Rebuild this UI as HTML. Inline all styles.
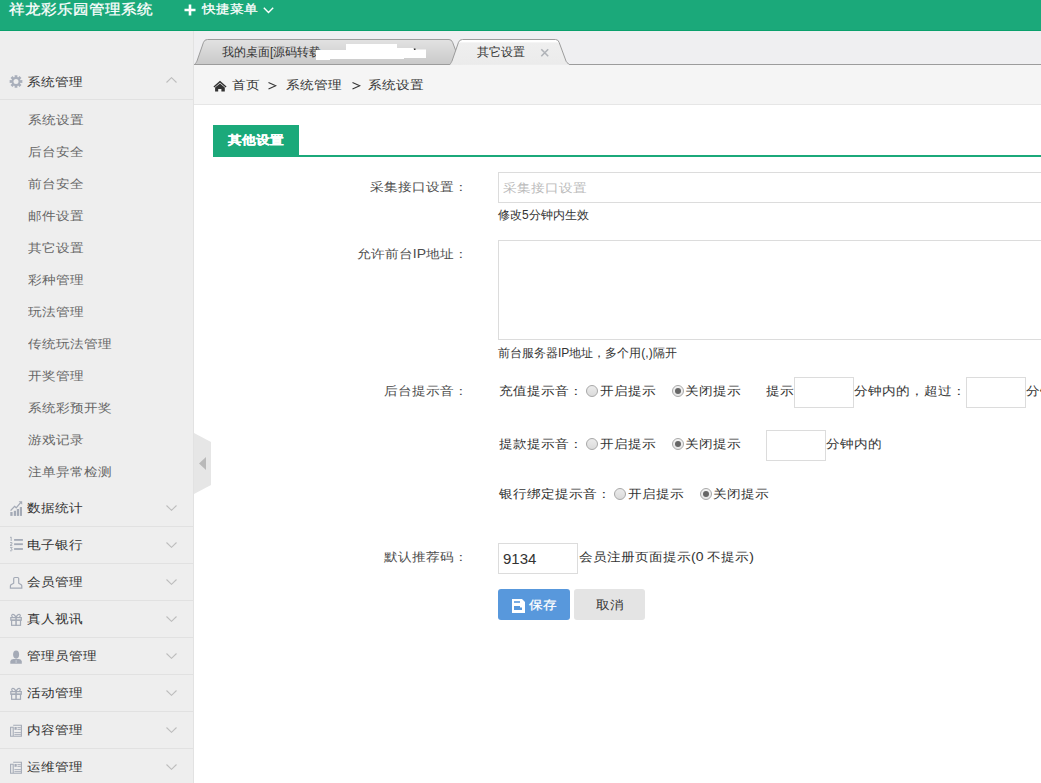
<!DOCTYPE html>
<html><head><meta charset="utf-8">
<style>
*{margin:0;padding:0;box-sizing:border-box}
html,body{width:1041px;height:783px;overflow:hidden;background:#fff;font-family:"Liberation Sans",sans-serif;font-size:14px;color:#333}
.a{position:absolute;white-space:nowrap}
#hdr{position:absolute;left:0;top:0;width:1041px;height:31px;background:#1ba97a;border-bottom:1px solid #0aa06c}
#side{position:absolute;left:0;top:31px;width:194px;height:752px;background:#eeeeee;border-right:1px solid #e2e2e2}
#tabs{position:absolute;left:194px;top:31px;width:847px;height:34px;background:#efeff1}
#crumb{position:absolute;left:194px;top:65px;width:847px;height:40px;background:#f5f5f5;border-bottom:1px solid #e6e6e6}
.t14{font-size:14px;line-height:20px;height:20px;transform:scaleY(0.88);transform-origin:0 3px}
.t12{font-size:12px;line-height:18px;height:18px}
.sub{color:#666;left:28px}
.grp{color:#333;left:27px}
.sep{position:absolute;left:0;width:193px;height:1px;background:#e1e1e1}
.chev{position:absolute;left:166px;width:11px;height:6px}
.ico{position:absolute;left:9px;width:14px;height:14px}
.lbl{color:#4d4d4d;text-align:right;width:200px;left:268px}
.inp{position:absolute;border:1px solid #dcdcdc;background:#fff}
.radio{position:absolute;width:12px;height:12px;border-radius:50%;border:1px solid #b5b5b5;background:linear-gradient(#f2f2f2,#d9d9d9)}
.radio.on::after{content:"";position:absolute;left:2.5px;top:2.5px;width:5px;height:5px;border-radius:50%;background:#555}
</style></head><body>

<svg width="0" height="0" style="position:absolute"><defs><linearGradient id="rg1" x1="0" y1="0" x2="0" y2="1"><stop offset="0" stop-color="#ececec"/><stop offset="1" stop-color="#dadada"/></linearGradient><linearGradient id="rg2" x1="0" y1="0" x2="0" y2="1"><stop offset="0" stop-color="#f4f4f4"/><stop offset="1" stop-color="#e4e4e4"/></linearGradient></defs></svg>
<div id="hdr"></div>
<div class="a" style="left:9px;top:0px;font-size:16px;line-height:20px;color:#fff;-webkit-text-stroke:0.3px #fff;transform:scaleY(0.9);transform-origin:0 2px">祥龙彩乐园管理系统</div>
<svg class="a" style="left:184px;top:4px" width="12" height="12" viewBox="0 0 12 12"><path d="M6 0.5V11.5M0.5 6H11.5" stroke="#fff" stroke-width="2.6"/></svg>
<div class="a t14" style="left:202px;top:-1px;color:#fff;-webkit-text-stroke:0.3px #fff">快捷菜单</div>
<svg class="a" style="left:263px;top:7px" width="11" height="7" viewBox="0 0 11 7"><path d="M0.8 0.8L5.5 5.5L10.2 0.8" stroke="#fff" stroke-width="1.4" fill="none"/></svg>

<div id="side"></div>

<!-- sidebar -->
<svg class="a" style="left:8px;top:73px" width="16" height="17" viewBox="8 73 16 17"><path d="M14.73 77.39 L14.58 75.16 L17.42 75.16 L17.27 77.39 L18.01 77.70 L19.48 76.01 L21.49 78.02 L19.80 79.49 L20.11 80.23 L22.34 80.08 L22.34 82.92 L20.11 82.77 L19.80 83.51 L21.49 84.98 L19.48 86.99 L18.01 85.30 L17.27 85.61 L17.42 87.84 L14.58 87.84 L14.73 85.61 L13.99 85.30 L12.52 86.99 L10.51 84.98 L12.20 83.51 L11.89 82.77 L9.66 82.92 L9.66 80.08 L11.89 80.23 L12.20 79.49 L10.51 78.02 L12.52 76.01 L13.99 77.70Z" fill="#a9afbb"/><circle cx="16" cy="81.5" r="4.6" fill="#a9afbb"/><circle cx="16" cy="81.5" r="2.5" fill="#eee"/></svg>
<svg class="a" style="left:8px;top:499px" width="16" height="18" viewBox="8 499 16 18"><g fill="#a4aab6"><rect x="10.3" y="512" width="2.3" height="3.9"/><rect x="13.8" y="510.8" width="2.2" height="5.1"/><rect x="16.8" y="509" width="2.2" height="6.9"/><rect x="19.8" y="507" width="2.2" height="8.9"/></g><path d="M10.6 510.6L14.6 506.3L16.2 507.8L20.6 502.6" stroke="#a4aab6" stroke-width="1.3" fill="none"/><path d="M18.6 501.2H22.2V504.8Z" fill="#a4aab6"/></svg>
<svg class="a" style="left:8px;top:535px" width="16" height="18" viewBox="8 535 16 18"><g fill="#a4aab6"><rect x="14.1" y="539" width="8.8" height="1.8"/><rect x="14.1" y="543.3" width="8.8" height="1.8"/><rect x="14.1" y="548.1" width="8.8" height="1.8"/></g><g stroke="#a4aab6" stroke-width="0.9" fill="none"><path d="M10 537.5L11.2 537V541"/><path d="M10 542.6H12V543.9L10 545.4H12.3"/><path d="M10 547.4H12.2L11 548.9Q12.4 549 12.2 550.2Q11.9 551 10 550.8"/></g></svg>
<svg class="a" style="left:8px;top:575px" width="16" height="16" viewBox="8 575 16 16"><path d="M13.7 583.2V578.6Q13.7 577.5 14.8 577.5H17.6Q18.7 577.5 18.7 578.6V583.2L21.2 584.8Q21.8 585.3 21.8 586.2V588.2H10.4V586.2Q10.4 585.3 11 584.8Z" stroke="#a4aab6" stroke-width="1.2" fill="none"/></svg>
<svg class="a" style="left:8px;top:611px" width="16" height="17" viewBox="8 611 16 17"><g transform="translate(0 0)"><g stroke="#a4aab6" stroke-width="1.2" fill="none"><path d="M16 617.4Q14 613.5 12.2 614.6Q11 615.6 12.6 617.2M16 617.4Q18 613.5 19.8 614.6Q21 615.6 19.4 617.2"/><rect x="10.8" y="617.6" width="10.5" height="2.6"/><rect x="11.6" y="620.2" width="8.9" height="5.1"/></g><rect x="15.3" y="617" width="1.5" height="8.9" fill="#a4aab6"/></g></svg>
<svg class="a" style="left:8px;top:685px" width="16" height="17" viewBox="8 685 16 17"><g transform="translate(0 74)"><g stroke="#a4aab6" stroke-width="1.2" fill="none"><path d="M16 617.4Q14 613.5 12.2 614.6Q11 615.6 12.6 617.2M16 617.4Q18 613.5 19.8 614.6Q21 615.6 19.4 617.2"/><rect x="10.8" y="617.6" width="10.5" height="2.6"/><rect x="11.6" y="620.2" width="8.9" height="5.1"/></g><rect x="15.3" y="617" width="1.5" height="8.9" fill="#a4aab6"/></g></svg>
<svg class="a" style="left:8px;top:648px" width="16" height="18" viewBox="8 648 16 18"><ellipse cx="16.1" cy="654.6" rx="3" ry="4.1" fill="#a4aab6"/><path d="M10.3 663.8V661.6Q10.5 659.4 13.2 659H19Q21.6 659.4 21.8 661.6V663.8Z" fill="#a4aab6"/><rect x="15.6" y="660" width="1" height="3" fill="#c7ccd4"/></svg>
<svg class="a" style="left:8px;top:722px" width="16" height="17" viewBox="8 722 16 17"><g transform="translate(0 0)"><g stroke="#a4aab6" stroke-width="1.1" fill="none"><path d="M13.2 725.2H21.4V736.3H10.6V727.3H13.2V736.3"/></g><g fill="#a4aab6"><rect x="14.5" y="727" width="2.2" height="2.8"/><rect x="17.4" y="727.2" width="3.4" height="0.9"/><rect x="17.4" y="728.9" width="3.4" height="0.9"/><rect x="14.4" y="732.2" width="6.5" height="0.9"/><rect x="14.4" y="734.2" width="6.5" height="0.9"/></g></g></svg>
<svg class="a" style="left:8px;top:759px" width="16" height="17" viewBox="8 759 16 17"><g transform="translate(0 37)"><g stroke="#a4aab6" stroke-width="1.1" fill="none"><path d="M13.2 725.2H21.4V736.3H10.6V727.3H13.2V736.3"/></g><g fill="#a4aab6"><rect x="14.5" y="727" width="2.2" height="2.8"/><rect x="17.4" y="727.2" width="3.4" height="0.9"/><rect x="17.4" y="728.9" width="3.4" height="0.9"/><rect x="14.4" y="732.2" width="6.5" height="0.9"/><rect x="14.4" y="734.2" width="6.5" height="0.9"/></g></g></svg>

<svg class="ico" style="top:74px;display:none" width="14" height="14" viewBox="0 0 14 14"><g fill="#a4aab6"><path d="M7 1.2l1.1 1.6 1.9-.6.2 1.9 1.9.6-.8 1.8 1.2 1.5-1.7 1 .2 1.9-1.9 0-.8 1.8-1.6-1.1-1.6 1.1-.8-1.8-1.9 0 .2-1.9-1.7-1 1.2-1.5-.8-1.8 1.9-.6.2-1.9 1.9.6z"/></g><circle cx="7" cy="7" r="2.3" fill="#eee"/></svg>
<div class="a t14 grp" style="top:72px">系统管理</div>
<svg class="chev" style="top:77px" viewBox="0 0 11 6"><path d="M0.5 5.5L5.5 0.7L10.5 5.5" stroke="#bdbdbd" stroke-width="1.1" fill="none"/></svg>
<div class="sep" style="top:99px"></div>
<div class="a t14 sub" style="top:110px">系统设置</div>
<div class="a t14 sub" style="top:142px">后台安全</div>
<div class="a t14 sub" style="top:174px">前台安全</div>
<div class="a t14 sub" style="top:206px">邮件设置</div>
<div class="a t14 sub" style="top:238px">其它设置</div>
<div class="a t14 sub" style="top:270px">彩种管理</div>
<div class="a t14 sub" style="top:302px">玩法管理</div>
<div class="a t14 sub" style="top:334px">传统玩法管理</div>
<div class="a t14 sub" style="top:366px">开奖管理</div>
<div class="a t14 sub" style="top:398px">系统彩预开奖</div>
<div class="a t14 sub" style="top:430px">游戏记录</div>
<div class="a t14 sub" style="top:462px">注单异常检测</div>
<div class="a t14 grp" style="top:498px">数据统计</div>
<svg class="chev" style="top:505px" viewBox="0 0 11 6"><path d="M0.5 0.5L5.5 5.3L10.5 0.5" stroke="#bdbdbd" stroke-width="1.1" fill="none"/></svg>
<div class="sep" style="top:526px"></div>
<div class="a t14 grp" style="top:535px">电子银行</div>
<svg class="chev" style="top:542px" viewBox="0 0 11 6"><path d="M0.5 0.5L5.5 5.3L10.5 0.5" stroke="#bdbdbd" stroke-width="1.1" fill="none"/></svg>
<div class="sep" style="top:563px"></div>
<div class="a t14 grp" style="top:572px">会员管理</div>
<svg class="chev" style="top:579px" viewBox="0 0 11 6"><path d="M0.5 0.5L5.5 5.3L10.5 0.5" stroke="#bdbdbd" stroke-width="1.1" fill="none"/></svg>
<div class="sep" style="top:600px"></div>
<div class="a t14 grp" style="top:609px">真人视讯</div>
<svg class="chev" style="top:616px" viewBox="0 0 11 6"><path d="M0.5 0.5L5.5 5.3L10.5 0.5" stroke="#bdbdbd" stroke-width="1.1" fill="none"/></svg>
<div class="sep" style="top:637px"></div>
<div class="a t14 grp" style="top:646px">管理员管理</div>
<svg class="chev" style="top:653px" viewBox="0 0 11 6"><path d="M0.5 0.5L5.5 5.3L10.5 0.5" stroke="#bdbdbd" stroke-width="1.1" fill="none"/></svg>
<div class="sep" style="top:674px"></div>
<div class="a t14 grp" style="top:683px">活动管理</div>
<svg class="chev" style="top:690px" viewBox="0 0 11 6"><path d="M0.5 0.5L5.5 5.3L10.5 0.5" stroke="#bdbdbd" stroke-width="1.1" fill="none"/></svg>
<div class="sep" style="top:711px"></div>
<div class="a t14 grp" style="top:720px">内容管理</div>
<svg class="chev" style="top:727px" viewBox="0 0 11 6"><path d="M0.5 0.5L5.5 5.3L10.5 0.5" stroke="#bdbdbd" stroke-width="1.1" fill="none"/></svg>
<div class="sep" style="top:748px"></div>
<div class="a t14 grp" style="top:757px">运维管理</div>
<svg class="chev" style="top:764px" viewBox="0 0 11 6"><path d="M0.5 0.5L5.5 5.3L10.5 0.5" stroke="#bdbdbd" stroke-width="1.1" fill="none"/></svg>
<div class="sep" style="top:785px"></div>
<svg class="a" style="left:194px;top:433px" width="17" height="61" viewBox="0 0 17 61"><path d="M0 0L17 9V52L0 61Z" fill="#e6e6e6"/><path d="M12 24V37L5 30.5Z" fill="#b9b9b9"/></svg>
<div id="tabs"></div>
<div id="crumb"></div>


<!-- tabs -->
<svg class="a" style="left:194px;top:31px" width="847" height="34" viewBox="194 31 847 34">
<defs>
<linearGradient id="g1" x1="0" y1="0" x2="0" y2="1"><stop offset="0" stop-color="#e2e2e2"/><stop offset="1" stop-color="#c9c9c9"/></linearGradient>
<linearGradient id="g2" x1="0" y1="0" x2="0" y2="1"><stop offset="0" stop-color="#ffffff"/><stop offset="0.08" stop-color="#ffffff"/><stop offset="0.14" stop-color="#efefef"/><stop offset="1" stop-color="#ebebeb"/></linearGradient>
</defs>
<path d="M194.5 64.5C196 63 196.5 62 197 61L203.5 42.3Q204.5 39.5 207.5 39.5L449 39.5Q451.6 39.5 452.6 42.3L461 64.5Z" fill="url(#g1)" stroke="#9c9c9c" stroke-width="1"/>
<path d="M569 64.5H1041" stroke="#9c9c9c" stroke-width="1"/>
<path d="M194 64.5H452" stroke="#9c9c9c" stroke-width="1"/>
<path d="M449.5 65C451 63 451.5 62 452 61L458.5 42.3Q459.5 39.5 462.5 39.5L555.5 39.5Q558.1 39.5 559.1 42.3L566 61C566.5 62 567 63 569.5 64.5" fill="url(#g2)" stroke="#9c9c9c" stroke-width="1"/>
<path d="M450.5 65H568.5" stroke="#ededed" stroke-width="1.2"/>
<path d="M541.3 49.3L548.2 56.2M548.2 49.3L541.3 56.2" stroke="#b0b3b8" stroke-width="1.6"/>
</svg>
<div class="a t12" style="left:222px;top:43px;color:#333">我的桌面[源码转载</div>
<svg class="a" style="left:314px;top:42px" width="115" height="20" viewBox="314 42 115 20"><path d="M316 50H346V44H397V48H413V49.5H426V58H404V59H330V60H316Z" fill="#fff"/><path d="M414 48.5h1.5v1.5h-1.5z" fill="#333"/></svg>
<div class="a t12" style="left:477px;top:43px;color:#333">其它设置</div>

<!-- breadcrumb -->
<svg class="a" style="left:212px;top:79px" width="16" height="14" viewBox="212 79 16 14"><path d="M213.9 87L220 81.7L226.1 87" stroke="#333" stroke-width="1.4" fill="none"/><path d="M215.1 91.6V87.6L220 83.6L224.8 87.6V91.6H221.4V89H218.2V91.6Z" fill="#333"/></svg>
<div class="a t14" style="left:232px;top:75px;color:#333">首页</div>
<svg class="a" style="left:268px;top:82px" width="9" height="8" viewBox="0 0 9 8"><path d="M0.5 0.6L7.8 3.8L0.5 7" stroke="#333" stroke-width="1.1" fill="none"/></svg>
<div class="a t14" style="left:286px;top:75px;color:#333">系统管理</div>
<svg class="a" style="left:352px;top:82px" width="9" height="8" viewBox="0 0 9 8"><path d="M0.5 0.6L7.8 3.8L0.5 7" stroke="#333" stroke-width="1.1" fill="none"/></svg>
<div class="a t14" style="left:368px;top:75px;color:#333">系统设置</div>

<!-- content -->
<div class="a" style="left:213px;top:125px;width:86px;height:32px;background:#1ba97a"></div>
<div class="a" style="left:213px;top:155px;width:828px;height:2px;background:#1ba97a"></div>
<div class="a t14" style="left:228px;top:130px;color:#fff;font-weight:bold;-webkit-text-stroke:0.3px #fff">其他设置</div>

<div class="a t14 lbl" style="top:177px">采集接口设置：</div>
<div class="inp" style="left:498px;top:172px;width:600px;height:31px"></div>
<div class="a t14" style="left:503px;top:178px;color:#bbb">采集接口设置</div>
<div class="a t12" style="left:498px;top:206px;color:#333">修改5分钟内生效</div>

<div class="a t14 lbl" style="top:244px">允许前台IP地址：</div>
<div class="inp" style="left:498px;top:240px;width:600px;height:100px"></div>
<div class="a t12" style="left:498px;top:344px;color:#333">前台服务器IP地址，多个用(,)隔开</div>

<div class="a t14 lbl" style="top:381px">后台提示音：</div>
<div class="a t14" style="left:499px;top:381px;color:#333">充值提示音：</div>
<svg class="a" style="left:586px;top:385px" width="12" height="12" viewBox="0 0 12 12"><circle cx="6" cy="6" r="5.5" fill="url(#rg1)" stroke="#a8a8a8" stroke-width="1"/></svg>
<div class="a t14" style="left:600px;top:381px;color:#333">开启提示</div>
<svg class="a" style="left:672px;top:385px" width="12" height="12" viewBox="0 0 12 12"><circle cx="6" cy="6" r="5.5" fill="url(#rg2)" stroke="#a8a8a8" stroke-width="1"/><circle cx="6" cy="6" r="3" fill="#666"/></svg>
<div class="a t14" style="left:685px;top:381px;color:#333">关闭提示</div>
<div class="a t14" style="left:766px;top:381px;color:#333">提示</div>
<div class="inp" style="left:794px;top:377px;width:60px;height:31px"></div>
<div class="a t14" style="left:854px;top:381px;color:#333">分钟内的，超过：</div>
<div class="inp" style="left:966px;top:377px;width:60px;height:31px"></div>
<div class="a t14" style="left:1026px;top:381px;color:#333">分钟</div>

<div class="a t14" style="left:499px;top:434px;color:#333">提款提示音：</div>
<svg class="a" style="left:586px;top:438px" width="12" height="12" viewBox="0 0 12 12"><circle cx="6" cy="6" r="5.5" fill="url(#rg1)" stroke="#a8a8a8" stroke-width="1"/></svg>
<div class="a t14" style="left:600px;top:434px;color:#333">开启提示</div>
<svg class="a" style="left:672px;top:438px" width="12" height="12" viewBox="0 0 12 12"><circle cx="6" cy="6" r="5.5" fill="url(#rg2)" stroke="#a8a8a8" stroke-width="1"/><circle cx="6" cy="6" r="3" fill="#666"/></svg>
<div class="a t14" style="left:685px;top:434px;color:#333">关闭提示</div>
<div class="inp" style="left:766px;top:430px;width:60px;height:31px"></div>
<div class="a t14" style="left:826px;top:434px;color:#333">分钟内的</div>

<div class="a t14" style="left:499px;top:484px;color:#333">银行绑定提示音：</div>
<svg class="a" style="left:614px;top:488px" width="12" height="12" viewBox="0 0 12 12"><circle cx="6" cy="6" r="5.5" fill="url(#rg1)" stroke="#a8a8a8" stroke-width="1"/></svg>
<div class="a t14" style="left:628px;top:484px;color:#333">开启提示</div>
<svg class="a" style="left:700px;top:488px" width="12" height="12" viewBox="0 0 12 12"><circle cx="6" cy="6" r="5.5" fill="url(#rg2)" stroke="#a8a8a8" stroke-width="1"/><circle cx="6" cy="6" r="3" fill="#666"/></svg>
<div class="a t14" style="left:713px;top:484px;color:#333">关闭提示</div>

<div class="a t14 lbl" style="top:547px">默认推荐码：</div>
<div class="inp" style="left:498px;top:543px;width:80px;height:31px"></div>
<div class="a" style="left:503px;top:549px;font-size:15px;line-height:20px;color:#333">9134</div>
<div class="a t14" style="left:579px;top:547px;color:#333">会员注册页面提示(0 不提示)</div>

<div class="a" style="left:498px;top:589px;width:72px;height:31px;background:#5898dc;border-radius:3px"></div>
<svg class="a" style="left:512px;top:599px" width="13" height="14" viewBox="0 0 13 14"><path d="M0 0H10L13 3V14H0Z" fill="#fff"/><path d="M2 2.2H8V3.8H2Z" fill="#5898dc"/><path d="M2 7H8V8.5H10V11H2Z" fill="#5898dc"/></svg>
<div class="a t14" style="left:529px;top:595px;color:#fff;-webkit-text-stroke:0.25px #fff">保存</div>
<div class="a" style="left:574px;top:589px;width:71px;height:31px;background:#e4e4e4;border-radius:3px"></div>
<div class="a t14" style="left:596px;top:595px;color:#333">取消</div>
</body></html>
